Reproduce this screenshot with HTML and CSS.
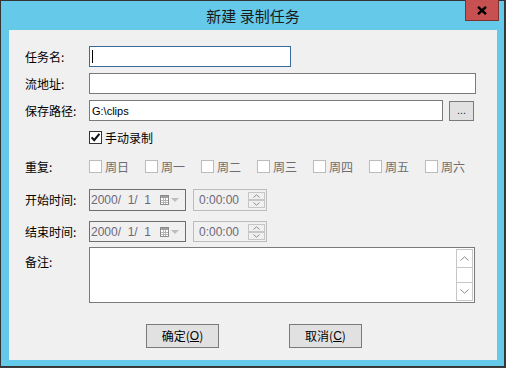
FILE: index.html
```html
<!DOCTYPE html>
<html lang="zh-CN">
<head>
<meta charset="utf-8">
<title>新建 录制任务</title>
<link rel="stylesheet" href="styles.css">
</head>
<body>
<div class="window">
  <div class="titlebar"><span class="title">新建 录制任务</span></div>
  <div class="close">
    <svg width="10" height="9" viewBox="0 0 10 9"><path d="M1 0.8 L9 8.2 M9 0.8 L1 8.2" stroke="#000" stroke-width="2.4" fill="none"/></svg>
  </div>
  <div class="client">
    <div class="row r1">
      <span class="lbl">任务名:</span>
      <div class="field focused w-name"><span class="caret"></span></div>
    </div>
    <div class="row r2">
      <span class="lbl">流地址:</span>
      <div class="field w-url"></div>
    </div>
    <div class="row r3">
      <span class="lbl">保存路径:</span>
      <div class="field w-path"><span class="latin">G:\clips</span></div>
      <div class="browse">...</div>
    </div>
    <div class="row r4 indent">
      <span class="cb checked">
        <svg width="11" height="11" viewBox="0 0 11 11"><path d="M1.6 5.4 L4.2 8.2 L9.4 1.8" stroke="#111" stroke-width="2.1" fill="none"/></svg>
      </span>
      <span class="cb-text">手动录制</span>
    </div>
    <div class="row r5">
      <span class="lbl">重复:</span>
      <div class="days">
        <span class="day"><span class="cb off"></span><span class="cb-text">周日</span></span>
        <span class="day"><span class="cb off"></span><span class="cb-text">周一</span></span>
        <span class="day"><span class="cb off"></span><span class="cb-text">周二</span></span>
        <span class="day"><span class="cb off"></span><span class="cb-text">周三</span></span>
        <span class="day"><span class="cb off"></span><span class="cb-text">周四</span></span>
        <span class="day"><span class="cb off"></span><span class="cb-text">周五</span></span>
        <span class="day"><span class="cb off"></span><span class="cb-text">周六</span></span>
      </div>
    </div>
    <div class="row r6">
      <span class="lbl">开始时间:</span>
      <div class="date">
        <span class="date-text">2000/&nbsp; 1/&nbsp; 1</span>
        <svg class="cal" width="9" height="10" viewBox="0 0 9 10"><rect x="0.5" y="0.5" width="8" height="9" fill="#fff" stroke="#8c8c8c"/><rect x="1" y="1" width="7" height="2" fill="#a0a0a0"/><path d="M1 5.5 H8 M1 7.5 H8 M3.5 3 V9 M5.5 3 V9" stroke="#b4b4b4" stroke-width="1"/></svg>
        <svg class="drop" width="8" height="4" viewBox="0 0 8 4"><path d="M0 0 H8 L4 4 Z" fill="#bdbdbd"/></svg>
      </div>
      <div class="time">
        <span class="time-text">0:00:00</span>
        <div class="spin">
          <span class="spin-btn"><svg width="7" height="4" viewBox="0 0 7 4"><path d="M0.5 3.5 L3.5 0.8 L6.5 3.5" stroke="#8c8c8c" fill="none"/></svg></span>
          <span class="spin-btn"><svg width="7" height="4" viewBox="0 0 7 4"><path d="M0.5 0.5 L3.5 3.2 L6.5 0.5" stroke="#8c8c8c" fill="none"/></svg></span>
        </div>
      </div>
    </div>
    <div class="row r7">
      <span class="lbl">结束时间:</span>
      <div class="date">
        <span class="date-text">2000/&nbsp; 1/&nbsp; 1</span>
        <svg class="cal" width="9" height="10" viewBox="0 0 9 10"><rect x="0.5" y="0.5" width="8" height="9" fill="#fff" stroke="#8c8c8c"/><rect x="1" y="1" width="7" height="2" fill="#a0a0a0"/><path d="M1 5.5 H8 M1 7.5 H8 M3.5 3 V9 M5.5 3 V9" stroke="#b4b4b4" stroke-width="1"/></svg>
        <svg class="drop" width="8" height="4" viewBox="0 0 8 4"><path d="M0 0 H8 L4 4 Z" fill="#bdbdbd"/></svg>
      </div>
      <div class="time">
        <span class="time-text">0:00:00</span>
        <div class="spin">
          <span class="spin-btn"><svg width="7" height="4" viewBox="0 0 7 4"><path d="M0.5 3.5 L3.5 0.8 L6.5 3.5" stroke="#8c8c8c" fill="none"/></svg></span>
          <span class="spin-btn"><svg width="7" height="4" viewBox="0 0 7 4"><path d="M0.5 0.5 L3.5 3.2 L6.5 0.5" stroke="#8c8c8c" fill="none"/></svg></span>
        </div>
      </div>
    </div>
    <div class="row r8">
      <span class="lbl lbl-top">备注:</span>
      <div class="memo">
        <div class="vscroll">
          <span class="sb-btn"><svg width="9" height="5" viewBox="0 0 9 5"><path d="M0.5 4.5 L4.5 0.8 L8.5 4.5" stroke="#8c8c8c" fill="none"/></svg></span>
          <span class="sb-track"></span>
          <span class="sb-btn"><svg width="9" height="5" viewBox="0 0 9 5"><path d="M0.5 0.5 L4.5 4.2 L8.5 0.5" stroke="#8c8c8c" fill="none"/></svg></span>
        </div>
      </div>
    </div>
    <div class="buttons">
      <div class="btn">确定(<u>O</u>)</div>
      <div class="btn">取消(<u>C</u>)</div>
    </div>
  </div>
</div>
</body>
</html>
```
FILE: styles.css
```css
html, body {
  margin: 0;
  padding: 0;
}
body {
  width: 506px;
  height: 368px;
  background: #3a3a3a;
  overflow: hidden;
}
.window {
  position: relative;
  width: 505px;
  height: 367px;
  box-sizing: border-box;
  border: 1px solid #353535;
  background: #65c9ea;
  padding: 0 7px 6px 8px;
  display: flex;
  flex-direction: column;
}
.titlebar {
  height: 29px;
  flex: none;
  display: flex;
  align-items: center;
  justify-content: center;
  font-family: "Noto Sans CJK SC", sans-serif;
  font-size: 15px;
  color: #1a1a1a;
}
.title {
  line-height: 1;
  margin-top: -1px;
}
.close {
  position: absolute;
  top: -1px;
  right: 5px;
  width: 34px;
  height: 21px;
  box-sizing: border-box;
  background: #c75050;
  border: 1px solid #7e3333;
  border-top: none;
  display: flex;
  align-items: center;
  justify-content: center;
}
.client {
  height: 330px;
  flex: none;
  box-sizing: border-box;
  background: #f0f0f0;
  padding: 16px 0 0 16px;
  display: flex;
  flex-direction: column;
  font-family: "Noto Sans CJK SC", sans-serif;
  font-size: 12px;
  color: #000;
}
.row {
  display: flex;
  align-items: center;
  height: 21px;
  flex: none;
}
.r2, .r3, .r4 { margin-top: 6px; }
.r5 { margin-top: 8px; }
.r6 { margin-top: 12px; height: 22px; }
.r7 { margin-top: 10px; }
.r8 { margin-top: 5px; height: 56px; align-items: flex-start; }
.indent { padding-left: 64px; }
.lbl {
  width: 64px;
  flex: none;
  line-height: 14px;
}
.lbl-top { margin-top: 8px; }
.field {
  box-sizing: border-box;
  height: 21px;
  border: 1px solid #7a7a7a;
  background: #fff;
  display: flex;
  align-items: center;
  padding-left: 2px;
}
.field.focused { border-color: #3a6a9c; }
.w-name { width: 202px; }
.w-url { width: 387px; }
.w-path { width: 354px; }
.caret {
  width: 1px;
  height: 13px;
  background: #000;
}
.latin {
  font-family: "Liberation Sans", sans-serif;
  font-size: 11px;
  color: #000;
}
.browse {
  margin-left: 6px;
  width: 25px;
  height: 20px;
  box-sizing: border-box;
  border: 1px solid #7a7a7a;
  background: #e1e1e1;
  display: flex;
  align-items: center;
  justify-content: center;
  font-family: "Liberation Sans", sans-serif;
  font-size: 11px;
  line-height: 1;
  color: #1a1a50;
  padding-bottom: 1px;
}
.cb {
  width: 13px;
  height: 13px;
  box-sizing: border-box;
  flex: none;
  background: #fff;
  display: flex;
  align-items: center;
  justify-content: center;
}
.cb.checked { border: 1px solid #333; }
.cb.off { border: 1px solid #bcbcbc; }
.cb-text {
  margin-left: 3px;
  line-height: 14px;
}
.days {
  display: flex;
}
.day {
  width: 56px;
  display: flex;
  align-items: center;
  color: #6d6d6d;
}
.date {
  box-sizing: border-box;
  width: 97px;
  height: 22px;
  border: 1px solid #6e6e6e;
  background: #f0f0f0;
  display: flex;
  align-items: center;
  padding-left: 1px;
  padding-right: 6px;
}
.r7 .date, .r7 .time { height: 21px; }
.date-text, .time-text {
  font-family: "Liberation Sans", sans-serif;
  font-size: 12px;
  color: #6b6878;
  white-space: nowrap;
}
.date-text { flex: 1; }
.cal { flex: none; }
.drop { flex: none; margin-left: 2px; }
.time {
  margin-left: 7px;
  box-sizing: border-box;
  width: 74px;
  height: 22px;
  border: 1px solid #bcbcbc;
  background: #f0f0f0;
  display: flex;
  align-items: center;
  padding-left: 5px;
  padding-right: 1px;
}
.time-text { flex: 1; }
.spin {
  display: flex;
  flex-direction: column;
  gap: 0;
}
.spin-btn {
  width: 17px;
  height: 8px;
  box-sizing: border-box;
  border: 1px solid #c6c6c6;
  display: flex;
  align-items: center;
  justify-content: center;
}
.memo {
  box-sizing: border-box;
  width: 386px;
  height: 56px;
  border: 1px solid #7a7a7a;
  background: #fff;
  display: flex;
  justify-content: flex-end;
  padding: 1px;
}
.vscroll {
  width: 17px;
  box-sizing: border-box;
  border: 1px solid #c6c6c6;
  display: flex;
  flex-direction: column;
}
.sb-btn {
  height: 17px;
  flex: none;
  display: flex;
  align-items: center;
  justify-content: center;
}
.sb-btn:first-child { border-bottom: 1px solid #c6c6c6; }
.sb-btn:last-child { border-top: 1px solid #c6c6c6; }
.sb-track { flex: 1; }
.buttons {
  margin-top: 21px;
  display: flex;
  justify-content: center;
  gap: 70px;
  padding-left: 2px;
  padding-right: 16px;
}
.btn {
  width: 73px;
  height: 24px;
  box-sizing: border-box;
  border: 1px solid #7a7a7a;
  background: #e1e1e1;
  display: flex;
  align-items: center;
  justify-content: center;
  line-height: 14px;
}
.btn u {
  font-family: "Liberation Sans", sans-serif;
  text-decoration-thickness: 1px;
}
```
